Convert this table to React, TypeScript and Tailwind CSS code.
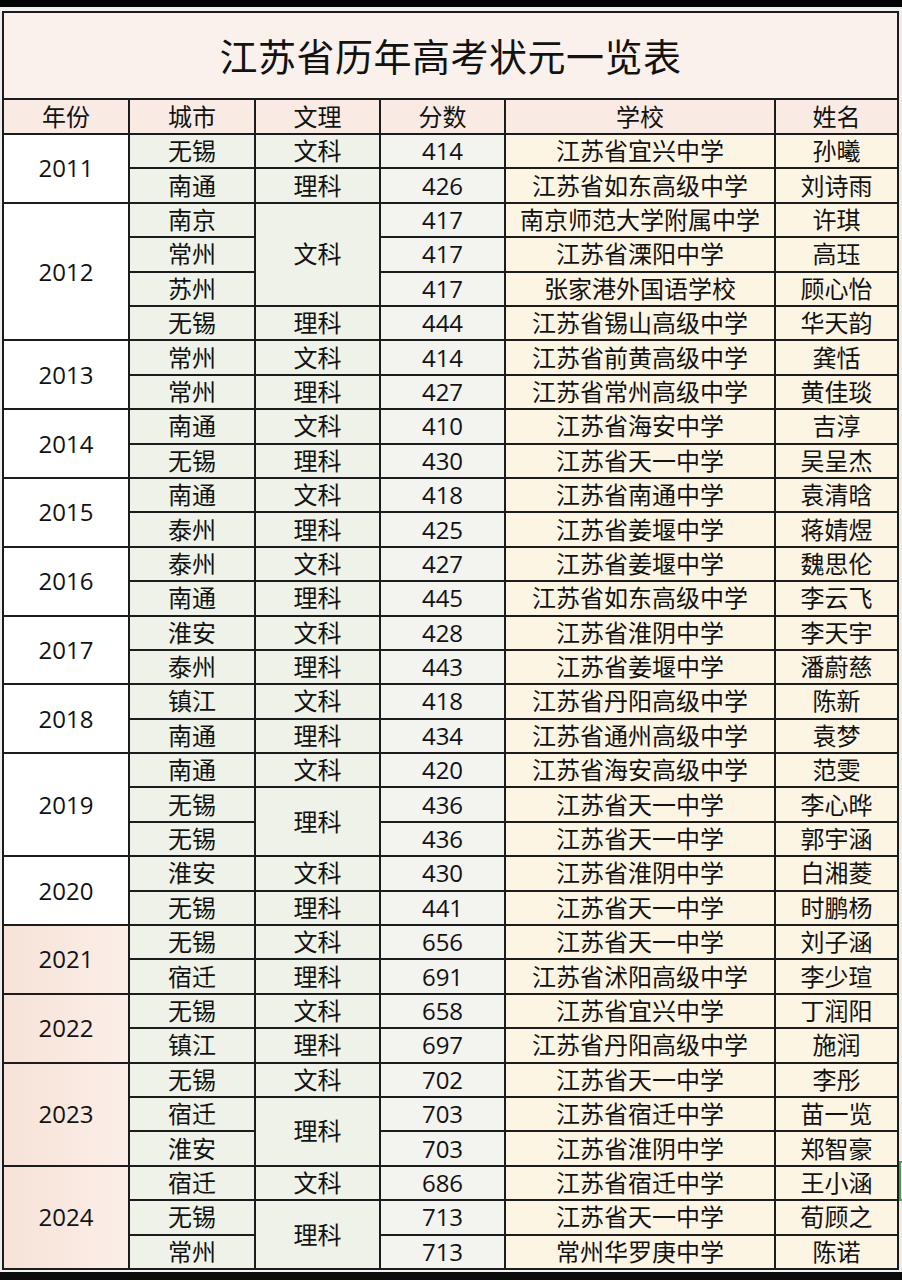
import React from "react";

type Row = {
  year?: string;
  yearSpan?: number;
  city: string;
  kind?: string;
  kindSpan?: number;
  score: string;
  school: string;
  name: string;
};

const rows: Row[] = [
  { year: "2011", yearSpan: 2, city: "无锡", kind: "文科", score: "414", school: "江苏省宜兴中学", name: "孙曦" },
  { city: "南通", kind: "理科", score: "426", school: "江苏省如东高级中学", name: "刘诗雨" },
  { year: "2012", yearSpan: 4, city: "南京", kind: "文科", kindSpan: 3, score: "417", school: "南京师范大学附属中学", name: "许琪" },
  { city: "常州", score: "417", school: "江苏省溧阳中学", name: "高珏" },
  { city: "苏州", score: "417", school: "张家港外国语学校", name: "顾心怡" },
  { city: "无锡", kind: "理科", score: "444", school: "江苏省锡山高级中学", name: "华天韵" },
  { year: "2013", yearSpan: 2, city: "常州", kind: "文科", score: "414", school: "江苏省前黄高级中学", name: "龚恬" },
  { city: "常州", kind: "理科", score: "427", school: "江苏省常州高级中学", name: "黄佳琰" },
  { year: "2014", yearSpan: 2, city: "南通", kind: "文科", score: "410", school: "江苏省海安中学", name: "吉淳" },
  { city: "无锡", kind: "理科", score: "430", school: "江苏省天一中学", name: "吴呈杰" },
  { year: "2015", yearSpan: 2, city: "南通", kind: "文科", score: "418", school: "江苏省南通中学", name: "袁清晗" },
  { city: "泰州", kind: "理科", score: "425", school: "江苏省姜堰中学", name: "蒋婧煜" },
  { year: "2016", yearSpan: 2, city: "泰州", kind: "文科", score: "427", school: "江苏省姜堰中学", name: "魏思伦" },
  { city: "南通", kind: "理科", score: "445", school: "江苏省如东高级中学", name: "李云飞" },
  { year: "2017", yearSpan: 2, city: "淮安", kind: "文科", score: "428", school: "江苏省淮阴中学", name: "李天宇" },
  { city: "泰州", kind: "理科", score: "443", school: "江苏省姜堰中学", name: "潘蔚慈" },
  { year: "2018", yearSpan: 2, city: "镇江", kind: "文科", score: "418", school: "江苏省丹阳高级中学", name: "陈新" },
  { city: "南通", kind: "理科", score: "434", school: "江苏省通州高级中学", name: "袁梦" },
  { year: "2019", yearSpan: 3, city: "南通", kind: "文科", score: "420", school: "江苏省海安高级中学", name: "范雯" },
  { city: "无锡", kind: "理科", kindSpan: 2, score: "436", school: "江苏省天一中学", name: "李心晔" },
  { city: "无锡", score: "436", school: "江苏省天一中学", name: "郭宇涵" },
  { year: "2020", yearSpan: 2, city: "淮安", kind: "文科", score: "430", school: "江苏省淮阴中学", name: "白湘菱" },
  { city: "无锡", kind: "理科", score: "441", school: "江苏省天一中学", name: "时鹏杨" },
  { year: "2021", yearSpan: 2, city: "无锡", kind: "文科", score: "656", school: "江苏省天一中学", name: "刘子涵" },
  { city: "宿迁", kind: "理科", score: "691", school: "江苏省沭阳高级中学", name: "李少瑄" },
  { year: "2022", yearSpan: 2, city: "无锡", kind: "文科", score: "658", school: "江苏省宜兴中学", name: "丁润阳" },
  { city: "镇江", kind: "理科", score: "697", school: "江苏省丹阳高级中学", name: "施润" },
  { year: "2023", yearSpan: 3, city: "无锡", kind: "文科", score: "702", school: "江苏省天一中学", name: "李彤" },
  { city: "宿迁", kind: "理科", kindSpan: 2, score: "703", school: "江苏省宿迁中学", name: "苗一览" },
  { city: "淮安", score: "703", school: "江苏省淮阴中学", name: "郑智豪" },
  { year: "2024", yearSpan: 3, city: "宿迁", kind: "文科", score: "686", school: "江苏省宿迁中学", name: "王小涵" },
  { city: "无锡", kind: "理科", kindSpan: 2, score: "713", school: "江苏省天一中学", name: "荀顾之" },
  { city: "常州", score: "713", school: "常州华罗庚中学", name: "陈诺" },
];

const spanClass: Record<number, string> = {
  1: "row-span-1",
  2: "row-span-2",
  3: "row-span-3",
  4: "row-span-4",
};

const cols = "grid grid-cols-[124px_124px_123px_123px_268px_121px] gap-[2px]";
const cell = "flex items-center justify-center leading-none";

export default function App() {
  return (
    <div
      className="relative w-[902px] h-[1280px] bg-[#ececec] text-[#121212] overflow-hidden"
      style={{ fontFamily: '"Open Sans", "Noto Sans CJK SC", sans-serif' }}
    >
      <div className="h-[7px] bg-[#050505]" />
      <div className="h-[4px] bg-[#f1f1f1]" />

      <div className="ml-[2px] w-[897px] bg-[#1c1c1c] p-[2px] flex flex-col gap-[2px]">
        <div className="h-[85px] bg-[#fbf1ec] flex items-center justify-center text-[38px] pt-[2px] tracking-[0.5px]">
          江苏省历年高考状元一览表
        </div>

        <div className={`${cols} h-[33px] text-[24px]`}>
          {["年份", "城市", "文理", "分数", "学校", "姓名"].map((h) => (
            <div key={h} className={`${cell} bg-[#f9ebe4]`}>
              {h}
            </div>
          ))}
        </div>

        <div className={`${cols} h-[1133px] grid-rows-[repeat(33,minmax(0,1fr))] text-[24px]`}>
          {rows.map((r, i) => (
            <React.Fragment key={i}>
              {r.year && (
                <div
                  className={`${cell} ${spanClass[r.yearSpan ?? 1]} ${
                    Number(r.year) >= 2021 ? "bg-gradient-to-r from-[#f7e2d7] to-[#fbeee8]" : "bg-white"
                  }`}
                >
                  {r.year}
                </div>
              )}
              <div className={`${cell} bg-[#eef2e8]`}>{r.city}</div>
              {r.kind && (
                <div className={`${cell} ${spanClass[r.kindSpan ?? 1]} bg-[#eef2e8]`}>{r.kind}</div>
              )}
              <div className={`${cell} bg-[#f3f3ef]`}>{r.score}</div>
              <div className={`${cell} bg-[#fcf5e3]`}>{r.school}</div>
              <div className={`${cell} bg-[#fcf5e3]`}>{r.name}</div>
            </React.Fragment>
          ))}
        </div>
      </div>

      <div className="h-[2px] bg-[#f1f1f1]" />
      <div className="h-[8px] bg-[#0b0b0b]" />

      <div className="absolute right-0 top-[1161px] h-[40px] w-[3px] border-l-2 border-y-2 border-[#4c9a5a]" />
    </div>
  );
}
